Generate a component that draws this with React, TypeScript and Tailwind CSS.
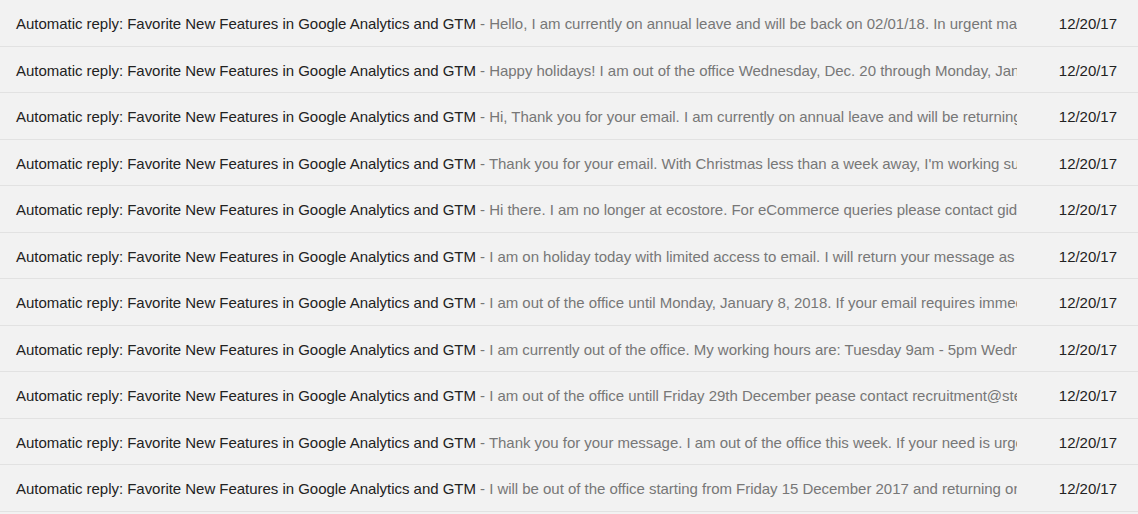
import React from "react";

const snippets = [
  "Hello, I am currently on annual leave and will be back on 02/01/18. In urgent matters please contact",
  "Happy holidays! I am out of the office Wednesday, Dec. 20 through Monday, January 1",
  "Hi, Thank you for your email. I am currently on annual leave and will be returning on",
  "Thank you for your email. With Christmas less than a week away, I'm working surprisingly",
  "Hi there. I am no longer at ecostore. For eCommerce queries please contact gideon",
  "I am on holiday today with limited access to email. I will return your message as soon",
  "I am out of the office until Monday, January 8, 2018. If your email requires immediate",
  "I am currently out of the office. My working hours are: Tuesday 9am - 5pm Wednesday",
  "I am out of the office untill Friday 29th December pease contact recruitment@stellar",
  "Thank you for your message. I am out of the office this week. If your need is urgent",
  "I will be out of the office starting from Friday 15 December 2017 and returning on",
];

export default function App() {
  return (
    <div
      className="w-[1138px] h-[514px] bg-[#f2f2f2] overflow-hidden"
      style={{ fontFamily: '"Liberation Sans", Arial, sans-serif' }}
    >
      {snippets.map((s, i) => (
        <div
          key={i}
          className="h-[46.5px] pt-[3px] flex items-center border-b border-[#e2e2e2] text-[15px] tracking-[-0.03px]"
        >
          <div className="w-[1017px] pl-[16px] whitespace-nowrap overflow-hidden shrink-0">
            <span className="text-[#222222]">
              Automatic reply: Favorite New Features in Google Analytics and GTM
            </span>
            <span className="text-[#777777]"> - {s}</span>
          </div>
          <div className="flex-1 text-right pr-[21px] text-[#222222]">12/20/17</div>
        </div>
      ))}
    </div>
  );
}
